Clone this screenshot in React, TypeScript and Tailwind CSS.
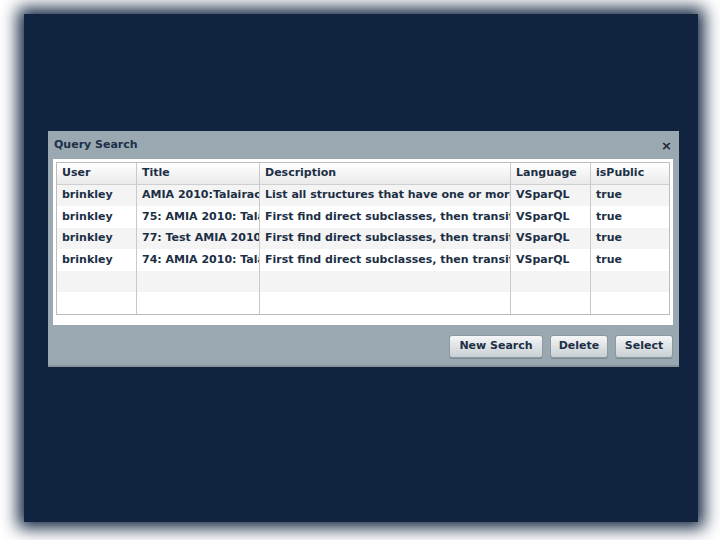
import React from 'react'

const rows = [
  { user: 'brinkley', title: 'AMIA 2010:Talairach Atlas Query', desc: 'List all structures that have one or more parts in common', lang: 'VSparQL', pub: 'true' },
  { user: 'brinkley', title: '75: AMIA 2010: Talairach Query', desc: 'First find direct subclasses, then transitive parts of each', lang: 'VSparQL', pub: 'true' },
  { user: 'brinkley', title: '77: Test AMIA 2010 Query', desc: 'First find direct subclasses, then transitive parts of each', lang: 'VSparQL', pub: 'true' },
  { user: 'brinkley', title: '74: AMIA 2010: Talairach Query', desc: 'First find direct subclasses, then transitive parts of each', lang: 'VSparQL', pub: 'true' },
  { user: '', title: '', desc: '', lang: '', pub: '' },
  { user: '', title: '', desc: '', lang: '', pub: '' },
]

const cols = ['w-[80px]', 'w-[123px]', 'w-[251px]', 'w-[80px]', 'w-[79px]']

function Cell({ w, children, last }: { w: string; children?: React.ReactNode; last?: boolean }) {
  return (
    <div className={`${w} shrink-0 h-full flex items-center pl-[5px] overflow-hidden whitespace-nowrap ${last ? '' : 'border-r border-[#c9c9c9]'}`}>
      {children}
    </div>
  )
}

function Btn({ label, w }: { label: string; w: string }) {
  return (
    <button className={`${w} h-[23px] rounded-[3px] border border-[#8d99a1] bg-gradient-to-b from-[#f5f6f7] to-[#c8cfd4] text-[11px] font-bold text-[#1c2f45] shadow-[0_1px_0_#7f8b93]`}>
      {label}
    </button>
  )
}

export default function App() {
  return (
    <div className="w-[720px] h-[540px] bg-white pt-[14px] pl-[24px]" style={{ fontFamily: '"DejaVu Sans", Verdana, sans-serif' }}>
      <div className="w-[674px] h-[508px] bg-[#10233f] shadow-[0_0_16px_6px_#10233f] pt-[117px] pl-[24px]">
        <div className="w-[631px] h-[236px] bg-[#9aa8b1] border-b-2 border-[#87949c] flex flex-col">
          <div className="h-[28px] flex items-center justify-between pl-[6px] pr-[7px] pt-[1px]">
            <span className="text-[11px] font-bold text-[#1b3048]">Query Search</span>
            <span className="text-[13px] font-bold text-[#1b2535] leading-none">×</span>
          </div>
          <div className="mx-[5px] w-[620px] h-[166px] bg-white pt-[3px] pl-[3px]">
            <div className="w-[614px] border border-[#bdbdbd] text-[11px] font-bold text-[#1c2f45]">
              <div className="h-[22px] flex bg-gradient-to-b from-white to-[#eaeaea] border-b border-[#cfcfcf] font-semibold">
                <Cell w={cols[0]}>User</Cell>
                <Cell w={cols[1]}>Title</Cell>
                <Cell w={cols[2]}>Description</Cell>
                <Cell w={cols[3]}>Language</Cell>
                <Cell w={cols[4]} last>isPublic</Cell>
              </div>
              {rows.map((r, i) => (
                <div key={i} className={`${i % 2 === 0 ? 'h-[21px] bg-[#f4f4f4]' : 'h-[22px] bg-white'} flex`}>
                  <Cell w={cols[0]}>{r.user}</Cell>
                  <Cell w={cols[1]}>{r.title}</Cell>
                  <Cell w={cols[2]}>{r.desc}</Cell>
                  <Cell w={cols[3]}>{r.lang}</Cell>
                  <Cell w={cols[4]} last>{r.pub}</Cell>
                </div>
              ))}
            </div>
          </div>
          <div className="flex-1 flex items-center justify-end pr-[6px] gap-[7px] pt-[2px]">
            <Btn label="New Search" w="w-[94px]" />
            <Btn label="Delete" w="w-[58px]" />
            <Btn label="Select" w="w-[58px]" />
          </div>
        </div>
      </div>
    </div>
  )
}
